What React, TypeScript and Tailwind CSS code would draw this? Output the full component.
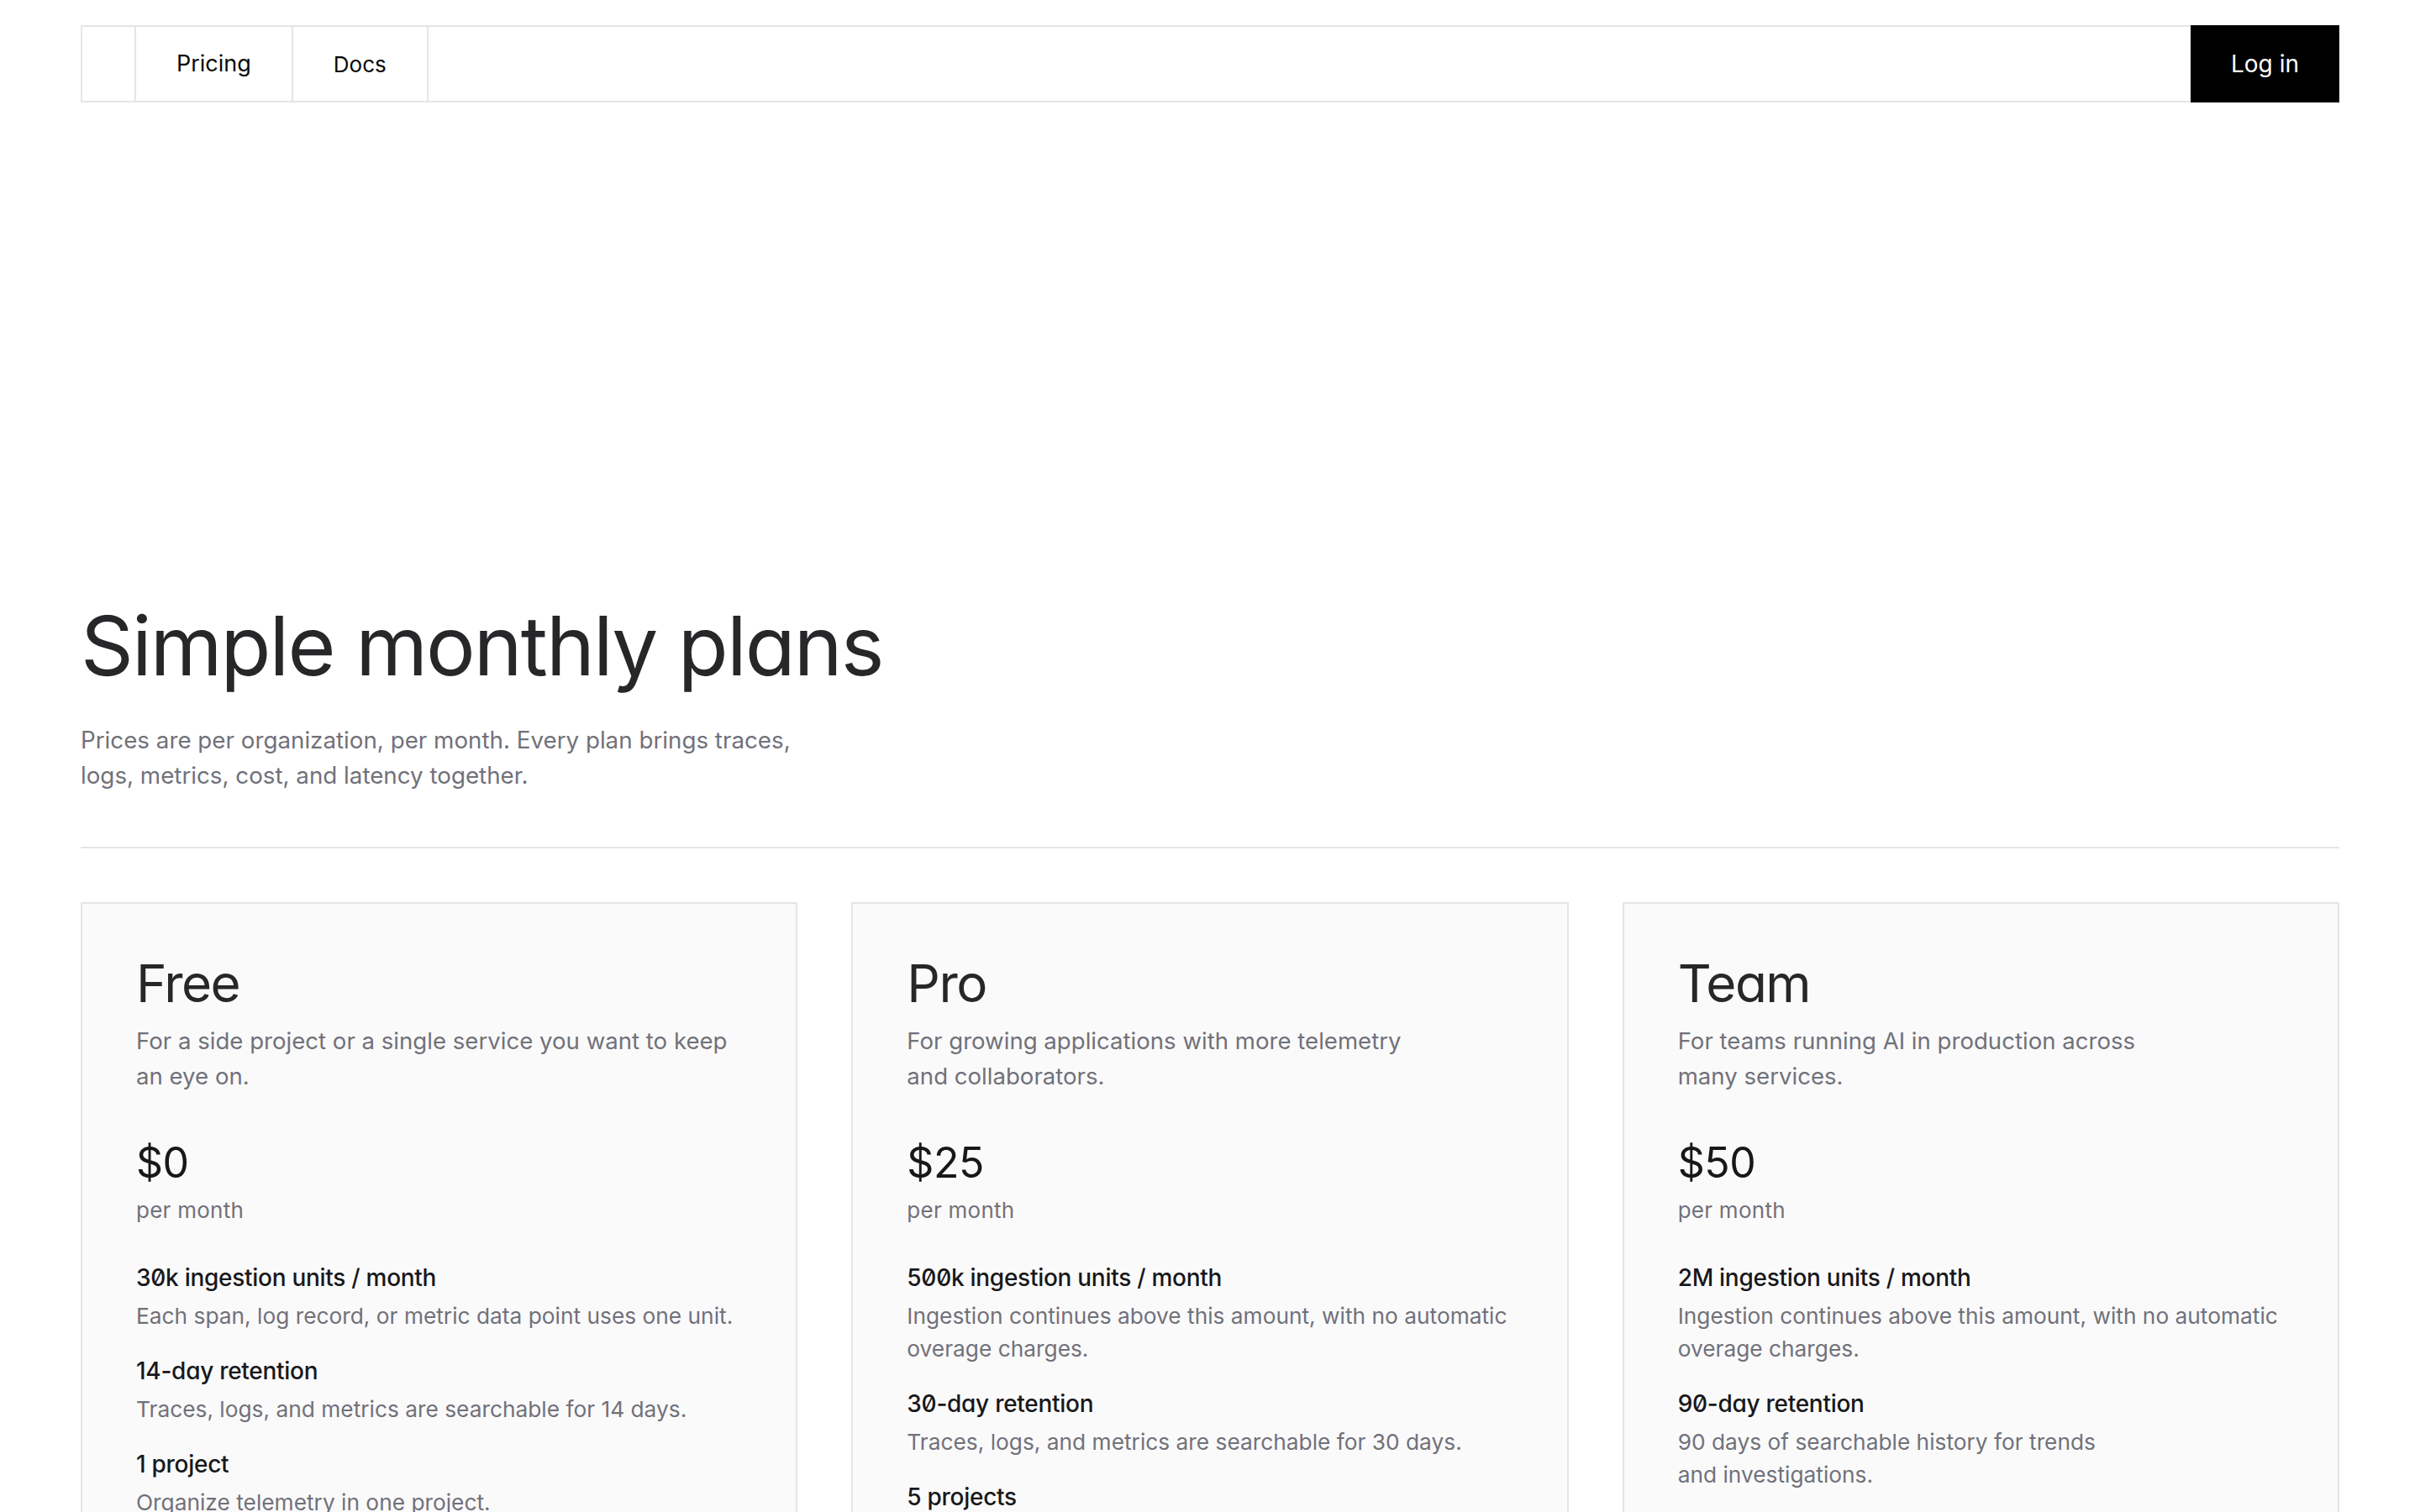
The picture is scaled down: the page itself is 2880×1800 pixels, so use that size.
import React from "react";

type Feature = { title: string; desc: React.ReactNode };
type Plan = {
  name: string;
  desc: React.ReactNode;
  price: string;
  features: Feature[];
};

const plans: Plan[] = [
  {
    name: "Free",
    desc: (
      <>
        For a side project or a single service you want to keep
        <br />
        an eye on.
      </>
    ),
    price: "$0",
    features: [
      { title: "30k ingestion units / month", desc: "Each span, log record, or metric data point uses one unit." },
      { title: "14-day retention", desc: "Traces, logs, and metrics are searchable for 14 days." },
      { title: "1 project", desc: "Organize telemetry in one project." },
      { title: "Community support", desc: "Get help from the community forum." },
    ],
  },
  {
    name: "Pro",
    desc: (
      <>
        For growing applications with more telemetry
        <br />
        and collaborators.
      </>
    ),
    price: "$25",
    features: [
      { title: "500k ingestion units / month", desc: "Ingestion continues above this amount, with no automatic overage charges." },
      { title: "30-day retention", desc: "Traces, logs, and metrics are searchable for 30 days." },
      { title: "5 projects", desc: "Separate telemetry across up to five projects." },
    ],
  },
  {
    name: "Team",
    desc: (
      <>
        For teams running AI in production across
        <br />
        many services.
      </>
    ),
    price: "$50",
    features: [
      { title: "2M ingestion units / month", desc: "Ingestion continues above this amount, with no automatic overage charges." },
      {
        title: "90-day retention",
        desc: (
          <>
            90 days of searchable history for trends
            <br />
            and investigations.
          </>
        ),
      },
      { title: "Unlimited projects", desc: "Organize telemetry across as many projects as you need." },
    ],
  },
];

function PlanCard({ plan }: { plan: Plan }) {
  return (
    <div className="border-2 border-[#e5e5e5] bg-[#fafafa] p-16">
      <h2 className="text-[62px] font-normal leading-none tracking-[-0.025em] text-[#27272a] [font-feature-settings:'cv11']">
        {plan.name}
      </h2>
      <p className="mt-4 text-[27.6px] leading-[42px] text-[#71717a]">{plan.desc}</p>
      <div className="mt-[57px] text-[50px] leading-none tracking-[-0.01em] text-[#18181b]">{plan.price}</div>
      <div className="mt-3 text-[26px] leading-10 tracking-[0.01em] text-[#71717a]">per month</div>
      <div className="mt-10 flex flex-col gap-[26px]">
        {plan.features.map((f) => (
          <div key={f.title}>
            <div className="text-[28px] font-medium leading-10 tracking-[-0.01em] text-[#18181b] [font-feature-settings:'cv11','zero']">
              {f.title}
            </div>
            <div className="mt-[6px] text-[26.3px] leading-[39px] text-[#71717a]">{f.desc}</div>
          </div>
        ))}
      </div>
    </div>
  );
}

export default function App() {
  return (
    <div className="min-h-screen bg-white font-['Inter',sans-serif] text-[#0a0a0a] antialiased">
      <div className="px-24 pt-[30px] pb-32">
        <nav className="flex h-[92px] border-2 border-[#e5e5e5]">
          <div className="w-16 border-r-2 border-[#e5e5e5]" />
          <a className="flex items-center border-r-2 border-[#e5e5e5] px-12 text-[27px] text-[#0a0a0a]">Pricing</a>
          <a className="flex items-center border-r-2 border-[#e5e5e5] px-12 text-[26px] text-[#0a0a0a]">Docs</a>
          <div className="flex-1" />
          <button className="-my-[2px] -mr-[2px] flex items-center bg-black px-12 text-[28px] text-white">Log in</button>
        </nav>

        <section className="mt-[598px]">
          <h1 className="text-[98px] font-normal leading-none tracking-[-0.02em] text-[#27272a] [font-feature-settings:'cv11']">
            Simple monthly plans
          </h1>
          <p className="mt-[42px] text-[27.75px] leading-[42px] text-[#71717a]">
            Prices are per organization, per month. Every plan brings traces,
            <br />
            logs, metrics, cost, and latency together.
          </p>
        </section>

        <div className="mt-16 h-[2px] bg-[#e5e5e5]" />

        <div className="mt-16 grid grid-cols-3 items-start gap-16">
          {plans.map((p) => (
            <PlanCard key={p.name} plan={p} />
          ))}
        </div>
      </div>
    </div>
  );
}
